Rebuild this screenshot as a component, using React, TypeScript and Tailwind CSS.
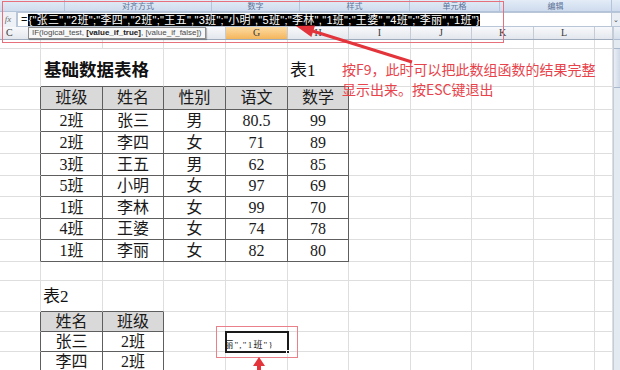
import React from "react";

const T1 = [
  ["班级", "姓名", "性别", "语文", "数学"],
  ["2班", "张三", "男", "80.5", "99"],
  ["2班", "李四", "女", "71", "89"],
  ["3班", "王五", "男", "62", "85"],
  ["5班", "小明", "女", "97", "69"],
  ["1班", "李林", "女", "99", "70"],
  ["4班", "王婆", "女", "74", "78"],
  ["1班", "李丽", "女", "82", "80"],
];

const T2 = [
  ["姓名", "班级"],
  ["张三", "2班"],
  ["李四", "2班"],
];

const FORMULA =
  '{"张三","2班";"李四","2班";"王五","3班";"小明","5班";"李林","1班";"王婆","4班";"李丽","1班"}';

const COL_LABELS = ["C", "", "", "", "G", "H", "I", "J", "K", "L", ""];

const RIBBON = [
  { w: "w-[65px]", label: "" },
  { w: "w-[147px]", label: "对齐方式" },
  { w: "w-[88px]", label: "数字" },
  { w: "w-[110px]", label: "样式" },
  { w: "w-[90px]", label: "单元格" },
  { w: "w-[112px]", label: "编辑" },
];

const inT1 = (r: number, c: number) => r >= 2 && r <= 9 && c >= 1 && c <= 5;
const inT2 = (r: number, c: number) => r >= 12 && r <= 14 && c >= 1 && c <= 2;
const inTable = (r: number, c: number) => inT1(r, c) || inT2(r, c);

function borderCls(r: number, c: number) {
  const dr = inTable(r, c) || inTable(r, c + 1);
  const db = inTable(r, c) || inTable(r + 1, c);
  if (dr && db) return "border-r border-b border-[#5e5e5e]";
  if (dr) return "border-r border-b border-r-[#5e5e5e] border-b-[#dedede]";
  if (db) return "border-r border-b border-r-[#dedede] border-b-[#5e5e5e]";
  return "border-r border-b border-[#dedede]";
}

function cellText(r: number, c: number) {
  if (inT1(r, c)) return T1[r - 2][c - 1];
  if (inT2(r, c)) return T2[r - 12][c - 1];
  return null;
}

function Sheet() {
  const cells: React.ReactNode[] = [];
  for (let r = 0; r < 15; r++) {
    for (let c = 0; c < 11; c++) {
      if (r === 1 && c === 2) continue;
      const key = `${r}-${c}`;

      if (r === 1 && c === 1) {
        cells.push(
          <div key={key} className={`col-span-2 flex items-end pl-[3px] pb-[7px] ${borderCls(1, 2)}`}>
            <span className="text-[17.5px] font-bold leading-none text-[#111] font-['Liberation_Sans','Noto_Sans_CJK_SC',sans-serif] whitespace-nowrap">
              基础数据表格
            </span>
          </div>
        );
        continue;
      }

      if (r === 1 && c === 5) {
        cells.push(
          <div key={key} className={`flex items-end pl-[2px] pb-[7px] ${borderCls(r, c)}`}>
            <span className="text-[17px] leading-none text-[#111] font-['Liberation_Serif','Noto_Sans_CJK_SC',serif]">表1</span>
          </div>
        );
        continue;
      }

      if (r === 11 && c === 1) {
        cells.push(
          <div key={key} className={`flex items-end pl-[2px] pb-[6px] ${borderCls(r, c)}`}>
            <span className="text-[17px] leading-none text-[#111] font-['Liberation_Serif','Noto_Sans_CJK_SC',serif]">表2</span>
          </div>
        );
        continue;
      }

      if (r === 13 && c === 4) {
        cells.push(
          <div key={key} className={`relative ${borderCls(r, c)}`}>
            <div className="absolute -left-[1px] -top-[1px] w-[64px] h-[22px] border-2 border-[#1a1a1a] overflow-hidden flex items-end justify-end pr-[13px] pb-[1px]">
              <span className="text-[9px] leading-none tracking-[1.2px] text-[#222] whitespace-nowrap font-['Liberation_Serif','Noto_Sans_CJK_SC',serif]">
                李丽","1班"{"}"}
              </span>
            </div>
            <div className="absolute -right-[3px] -bottom-[3px] w-[4px] h-[4px] bg-[#1a1a1a] border border-white" />
          </div>
        );
        continue;
      }

      const text = cellText(r, c);
      const head = (r === 2 || r === 12) && inTable(r, c);
      cells.push(
        <div
          key={key}
          className={`flex items-center justify-center ${borderCls(r, c)} ${head ? "bg-[#d9d9d9]" : ""}`}
        >
          {text && (
            <span className="text-[16px] leading-none text-[#1a1a1a] font-['Liberation_Serif','Noto_Sans_CJK_SC',serif]">
              {text}
            </span>
          )}
        </div>
      );
    }
  }

  return (
    <div className="grid grid-cols-[41px_62px_61px_62px_62px_61px_62px_61px_62px_61px_18px] grid-rows-[9px_38px_23px_22px_22px_22px_21px_22px_21px_22px_19px_31px_20px_20px_20px]">
      {cells}
    </div>
  );
}

export default function App() {
  return (
    <div className="relative w-[620px] h-[370px] overflow-hidden bg-white">
      {/* ribbon group labels */}
      <div className="flex h-[12px] bg-gradient-to-b from-[#e3ecf7] to-[#cfdcee] border-b border-[#b3c4da]">
        {RIBBON.map((g, i) => (
          <div
            key={i}
            className={`${g.w} border-r border-[#b4c4da] text-center text-[8px] leading-[11px] text-[#5a7196] font-['Noto_Sans_CJK_SC',sans-serif]`}
          >
            {g.label}
          </div>
        ))}
        <div className="flex-1" />
      </div>

      {/* formula bar */}
      <div className="flex h-[15px] bg-[#dfe7f1]">
        <div className="w-[17px] flex items-center justify-center bg-[#eef2f7] border-r border-[#b9c6d8]">
          <span className="text-[9px] italic text-[#6b6b6b] font-['Liberation_Serif',serif]">fx</span>
        </div>
        <div className="flex-1 flex items-center bg-white border border-[#b9c6d8] pl-[3px]">
          <span className="text-[11px] text-[#111] mr-[1px] font-['Liberation_Sans',sans-serif]">=</span>
          <span className="h-[12px] bg-black text-white text-[11px] leading-[12px] tracking-[0.3px] whitespace-nowrap font-['Liberation_Sans','Noto_Sans_CJK_SC',sans-serif]">
            {FORMULA}
          </span>
        </div>
        <div className="w-[8px] flex items-center justify-center bg-[#e9eef5] border-y border-[#b9c6d8]">
          <span className="text-[7px] leading-none text-[#444]">⌄</span>
        </div>
      </div>

      <div className="flex">
        <div className="w-[613px]">
          {/* column headers */}
          <div className="grid grid-cols-[41px_62px_61px_62px_62px_61px_62px_61px_62px_61px_18px] h-[13px] border-b border-[#9eabbd]">
            {COL_LABELS.map((l, i) => (
              <div
                key={i}
                className={`flex items-center border-r border-[#c5ccd6] text-[10px] leading-none text-[#3a3a3a] font-['Liberation_Serif',serif] ${
                  i === 0 ? "pl-[6px] justify-start" : "justify-center"
                } ${
                  i === 4
                    ? "bg-gradient-to-b from-[#fcdca2] to-[#f4b55a]"
                    : "bg-gradient-to-b from-[#f8f9fb] to-[#e3e7ed]"
                }`}
              >
                {l}
              </div>
            ))}
          </div>
          <Sheet />
        </div>

        {/* vertical scrollbar */}
        <div className="w-[7px] flex flex-col bg-[#e4eaf2] border-l border-[#c3cdda]">
          <div className="h-[13px] bg-gradient-to-b from-[#eef2f7] to-[#d6e0ec] border-b border-[#aebbd0]" />
          <div className="h-[8px]" />
          <div className="h-[40px] bg-gradient-to-r from-[#e9eef5] to-[#cfd9e7] border-y border-[#a9b8cc]" />
          <div className="flex-1" />
        </div>
      </div>

      {/* tooltip */}
      <div className="absolute left-[28px] top-[27px] w-[178px] h-[12px] bg-[#f7f7f7] border border-[#8d8d8d] shadow-[1px_1px_1px_rgba(0,0,0,0.25)] flex items-center pl-[3px]">
        <span className="text-[8px] leading-none text-[#4a4a4a] whitespace-nowrap font-['Liberation_Sans',sans-serif]">
          IF(logical_test, <b className="text-[#222]">[value_if_true]</b>, [value_if_false])
        </span>
      </div>

      {/* annotation */}
      <div className="absolute left-[342px] top-[59px] text-[14px] leading-[20px] text-[#e8434b] whitespace-nowrap font-['Noto_Sans_CJK_SC',sans-serif]">
        <div>按F9，此时可以把此数组函数的结果完整</div>
        <div>显示出来。按ESC键退出</div>
      </div>

      {/* highlight boxes */}
      <div className="absolute left-[2px] top-[1px] w-[502px] h-[42px] border border-[#e6707c]" />
      <div className="absolute left-[216px] top-[326px] w-[82px] h-[32px] border border-[#ea8089]" />

      {/* arrows */}
      <svg className="absolute left-0 top-0 pointer-events-none" width="620" height="370" viewBox="0 0 620 370">
        <line x1="412" y1="62" x2="311" y2="30.5" stroke="#e3333b" strokeWidth="3" />
        <polygon points="296,26 311.4,37 315,25.6" fill="#e3333b" />
        <polygon points="259,357 253,366 265,366" fill="#e3333b" />
        <rect x="257" y="365" width="4" height="6" fill="#e3333b" />
      </svg>

      {/* scrollbar stripe over overflowing annotation */}
      <div className="absolute right-0 top-[27px] w-[7px] h-[343px] bg-[#e4eaf2] border-l border-[#c3cdda] flex flex-col">
        <div className="h-[13px] bg-gradient-to-b from-[#eef2f7] to-[#d6e0ec] border-b border-[#aebbd0]" />
        <div className="h-[8px]" />
        <div className="h-[40px] bg-gradient-to-r from-[#e9eef5] to-[#cfd9e7] border-y border-[#a9b8cc]" />
      </div>
    </div>
  );
}
